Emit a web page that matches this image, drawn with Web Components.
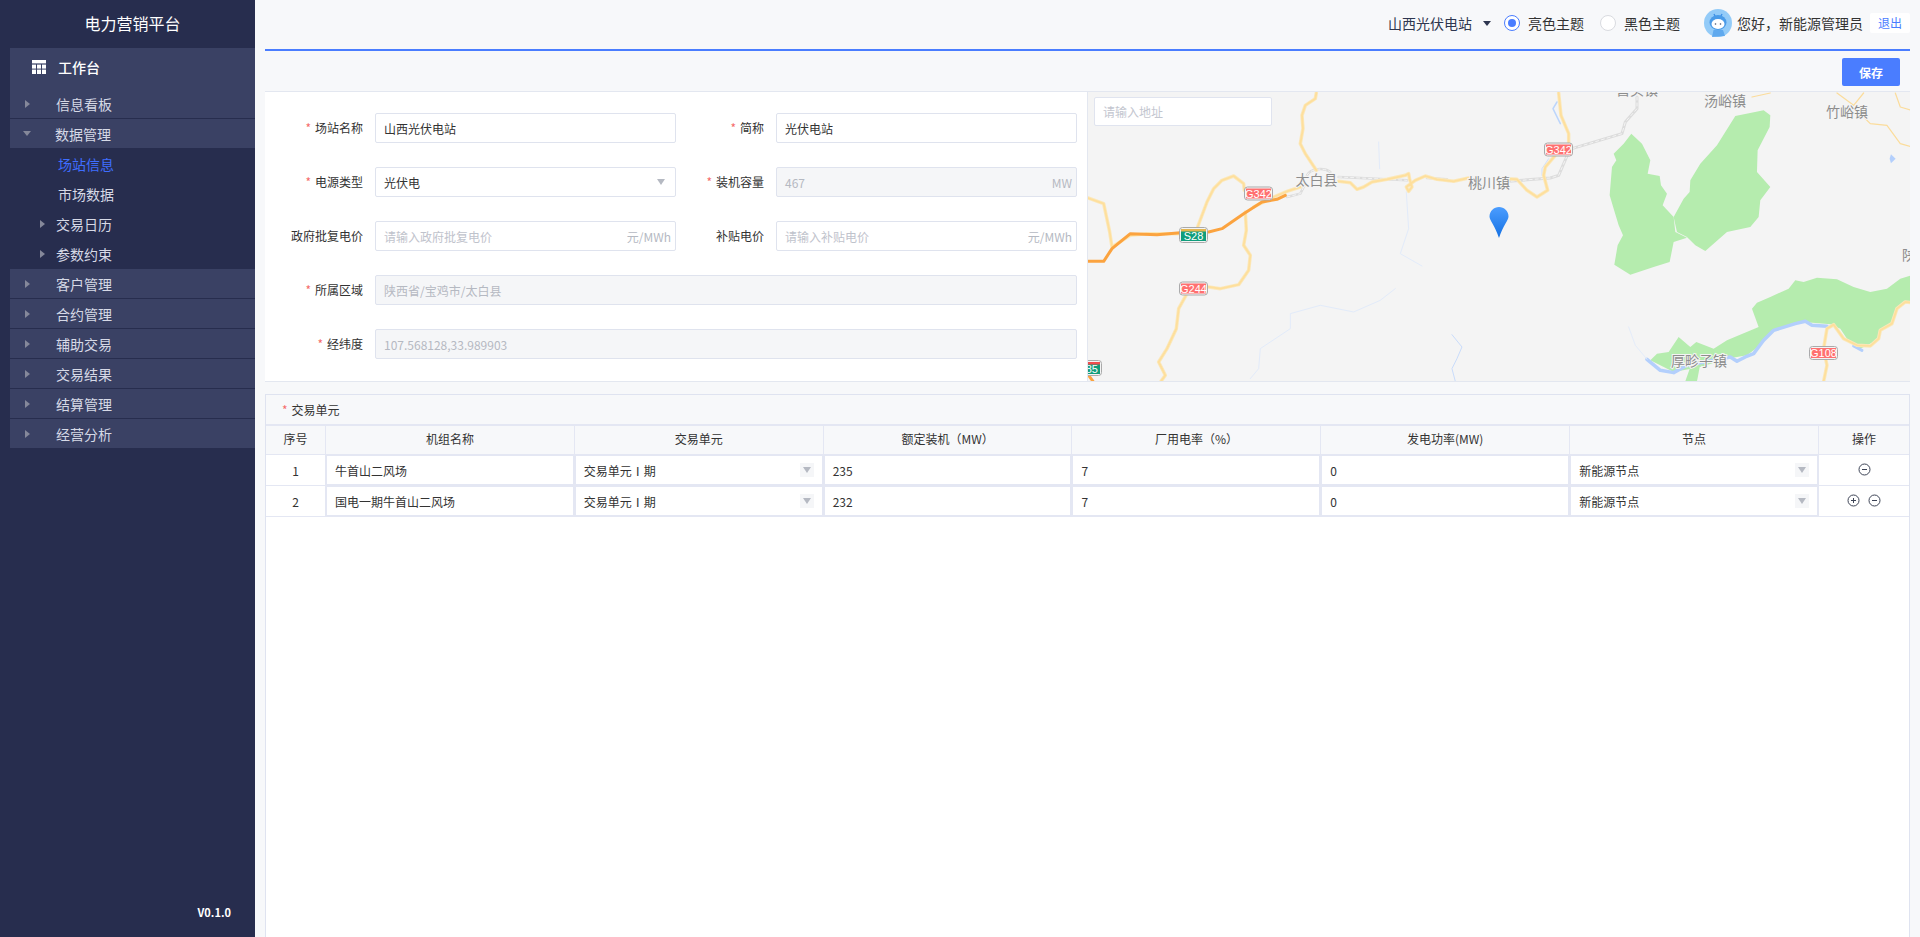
<!DOCTYPE html>
<html lang="zh">
<head>
<meta charset="utf-8">
<title>电力营销平台</title>
<style>
	html, body { margin: 0; height: 100%; overflow: hidden; }
	body {
		display: flex;
		background: #f7f8fa;
		color: #333;
		font-family: "Noto Sans CJK SC", "Noto Sans", sans-serif;
		font-size: 12px;
	}
	main { flex: 1; min-width: 0; display: flex; flex-direction: column; padding: 0 10px; }
	.editor { display: flex; background: #fff; border-top: 1px solid #e3e7f0; border-bottom: 1px solid #e3e7f0; height: 291px; box-sizing: border-box; }
</style>
</head>
<body>
<app-sidebar>
	<nav-item label="信息看板" arrow="right"></nav-item>
	<nav-item label="数据管理" arrow="down"></nav-item>
	<nav-item label="场站信息" sub active></nav-item>
	<nav-item label="市场数据" sub></nav-item>
	<nav-item label="交易日历" sub arrow="right"></nav-item>
	<nav-item label="参数约束" sub arrow="right"></nav-item>
	<nav-item label="客户管理" arrow="right"></nav-item>
	<nav-item label="合约管理" arrow="right"></nav-item>
	<nav-item label="辅助交易" arrow="right"></nav-item>
	<nav-item label="交易结果" arrow="right"></nav-item>
	<nav-item label="结算管理" arrow="right"></nav-item>
	<nav-item label="经营分析" arrow="right"></nav-item>
</app-sidebar>
<main>
	<top-bar></top-bar>
	<save-bar></save-bar>
	<div class="editor">
		<station-form></station-form>
		<map-view></map-view>
	</div>
	<unit-table></unit-table>
</main>

<script>
class AppSidebar extends HTMLElement {
	constructor() {
		super();
		this.shadowDOM = this.attachShadow({ mode: "open" });
	}

	connectedCallback() {
		this.shadowDOM.innerHTML = `
		<style>
		:host {
			display: flex;
			flex-direction: column;
			flex: none;
			width: 255px;
			height: 937px;
			box-sizing: border-box;
			padding-left: 10px;
			background: #272d4e;
			color: #fff;
		}
		.title {
			height: 48px;
			line-height: 47px;
			text-align: center;
			font-size: 16px;
		}
		.home {
			display: flex;
			align-items: center;
			gap: 12px;
			height: 41px;
			box-sizing: border-box;
			padding: 0 0 4px 22px;
			background: #3a4164;
			font-size: 14px;
			font-weight: 500;
		}
		.home svg { display: block; }
		.version {
			margin-top: auto;
			padding: 0 24px 16px 0;
			text-align: right;
			line-height: 18px;
			font-weight: 700;
			font-size: 11px;
		}
		</style>
		<div class="title">电力营销平台</div>
		<div class="home">
			<svg width="14" height="14" viewBox="0 0 14 14" fill="#fff">
				<rect width="14" height="3.4"/>
				<rect y="4.6" width="4" height="4"/><rect x="5" y="4.6" width="4" height="4"/><rect x="10" y="4.6" width="4" height="4"/>
				<rect y="9.6" width="4" height="4.4"/><rect x="5" y="9.6" width="4" height="4.4"/><rect x="10" y="9.6" width="4" height="4.4"/>
			</svg>
			<span>工作台</span>
		</div>
		<slot></slot>
		<div class="version">V0.1.0</div>
		`;
	}
}

class NavItem extends HTMLElement {
	constructor() {
		super();
		this.shadowDOM = this.attachShadow({ mode: "open" });
	}

	connectedCallback() {
		const arrow = this.getAttribute("arrow");
		const mark = arrow ? `<i class="${arrow}"></i>` : "";
		this.shadowDOM.innerHTML = `
		<style>
		:host {
			display: flex;
			align-items: center;
			height: 30px;
			box-sizing: border-box;
			padding-left: 15px;
			background: #3a4164;
			border-bottom: 1px solid #272d4e;
			color: #d6d9e6;
			font-size: 14px;
			line-height: 20px;
		}
		:host([sub]) {
			padding-left: 30px;
			background: #272d4e;
			border-bottom: 0;
		}
		i { display: block; flex: none; width: 0; height: 0; border-style: solid; border-color: transparent; }
		i.right { border-width: 4.5px 0 4.5px 5px; border-left-color: #85889a; margin-right: 26px; }
		i.down { border-width: 5px 4.5px 0 4.5px; border-top-color: #85889a; margin: 0 24px 0 -2px; }
		:host([sub]) i.right { margin-right: 11px; }
		:host([sub]:not([arrow])) { padding-left: 48px; }
		:host([active]) { color: #3f6eff; }
		</style>
		${mark}<span>${this.getAttribute("label")}</span>
		`;
	}
}

class ThemeRadio extends HTMLElement {
	constructor() {
		super();
		this.shadowDOM = this.attachShadow({ mode: "open" });
	}

	connectedCallback() {
		this.shadowDOM.innerHTML = `
		<style>
		:host { display: flex; align-items: center; gap: 8px; font-size: 14px; line-height: 20px; color: #333; }
		i { display: block; width: 16px; height: 16px; box-sizing: border-box; border: 1px solid #d9dbe0; border-radius: 50%; background: #fff; position: relative; }
		:host([checked]) i { border-color: #4a7dff; }
		:host([checked]) i::after { content: ""; position: absolute; left: 3px; top: 3px; width: 8px; height: 8px; border-radius: 50%; background: #4a7dff; }
		</style>
		<i></i><span><slot></slot></span>
		`;
	}
}

class TopBar extends HTMLElement {
	constructor() {
		super();
		this.shadowDOM = this.attachShadow({ mode: "open" });
	}

	connectedCallback() {
		this.shadowDOM.innerHTML = `
		<style>
		:host {
			display: flex;
			align-items: center;
			justify-content: flex-end;
			flex: none;
			height: 51px;
			box-sizing: border-box;
			padding-bottom: 3px;
			border-bottom: 2px solid #4a7dff;
			font-size: 14px;
			line-height: 20px;
			color: #333;
		}
		.station { color: #2e3650; }
		.caret { width: 0; height: 0; margin: 0 13px 0 11px; border-style: solid; border-width: 5px 4px 0; border-color: #2e3650 transparent transparent; }
		.dark { margin-left: 16px; }
		.avatar { display: block; margin-left: 24px; }
		.hello { margin-left: 5px; }
		.logout { margin-left: 7px; width: 40px; height: 20px; line-height: 20px; background: #fff; text-align: center; font-size: 12px; color: #4a7dff; border-radius: 2px; }
		</style>
		<span class="station">山西光伏电站</span>
		<span class="caret"></span>
		<theme-radio checked>亮色主题</theme-radio>
		<theme-radio class="dark">黑色主题</theme-radio>
		<svg class="avatar" width="28" height="28" viewBox="0 0 28 28">
			<circle cx="14" cy="14" r="14" fill="#93cbf8"/>
			<path d="M10 5 L11.5 8 M18 5 L16.5 8" stroke="#3d8fe6" stroke-width="1.4" fill="none"/>
			<path d="M8 28 L9.5 21 H19 L21 27 Z" fill="#5fa9ee"/>
			<ellipse cx="14" cy="13.5" rx="8.500" ry="7.500" fill="#4a9be8"/>
			<ellipse cx="14" cy="15" rx="6.500" ry="5" fill="#fff"/>
			<circle cx="11.5" cy="15" r=".8" fill="#44506a"/><circle cx="16.5" cy="15" r=".8" fill="#44506a"/>
		</svg>
		<span class="hello">您好，新能源管理员</span>
		<span class="logout">退出</span>
		`;
	}
}

class SaveBar extends HTMLElement {
	constructor() {
		super();
		this.shadowDOM = this.attachShadow({ mode: "open" });
	}

	connectedCallback() {
		this.shadowDOM.innerHTML = `
		<style>
		:host { display: flex; justify-content: flex-end; flex: none; height: 40px; box-sizing: border-box; padding: 7px 10px 0 0; }
		button {
			width: 58px;
			height: 28px;
			padding: 0;
			border: 0;
			border-radius: 2px;
			background: #4a7dff;
			color: #fff;
			font: 700 12px "Noto Sans CJK SC", sans-serif;
		}
		</style>
		<button type="button">保存</button>
		`;
	}
}

// label + box pair, the box text goes through the slot
class FormField extends HTMLElement {
	constructor() {
		super();
		this.shadowDOM = this.attachShadow({ mode: "open" });
	}

	connectedCallback() {
		const star = this.hasAttribute("required") ? "<em>*</em>" : "";
		const unit = this.getAttribute("unit");
		this.shadowDOM.innerHTML = `
		<style>
		:host { display: contents; color: #333; }
		label { align-self: center; justify-self: end; line-height: 30px; white-space: nowrap; }
		em { font-style: normal; color: #f56c6c; margin-right: 4px; }
		.box {
			display: flex;
			align-items: center;
			height: 30px;
			box-sizing: border-box;
			margin-left: 12px;
			padding: 0 8px;
			background: #fff;
			border: 1px solid #dfe3ee;
			border-radius: 2px;
			white-space: nowrap;
		}
		:host([wide]) .box { grid-column: 2 / -1; }
		:host([disabled]) .box { background: #f5f6f8; color: #b5b9c2; }
		:host([placeholder]) .value { color: #bfc3cc; }
		.unit { margin: 0 -4px 0 auto; color: #b5b9c2; }
		.drop { margin-left: auto; margin-right: 2px; width: 0; height: 0; border-style: solid; border-width: 6px 4.5px 0; border-color: #b5b9c2 transparent transparent; }
		</style>
		<label>${star}${this.getAttribute("label")}</label>
		<div class="box">
			<span class="value"><slot></slot></span>
			${unit ? `<span class="unit">${unit}</span>` : ""}
			${this.hasAttribute("select") ? `<span class="drop"></span>` : ""}
		</div>
		`;
	}
}

class StationForm extends HTMLElement {
	constructor() {
		super();
		this.shadowDOM = this.attachShadow({ mode: "open" });
	}

	connectedCallback() {
		this.shadowDOM.innerHTML = `
		<style>
		:host { display: block; flex: none; width: 822px; box-sizing: border-box; padding-top: 21px; }
		.grid { display: grid; grid-template-columns: 98px 313px 88px 313px; row-gap: 24px; }
		</style>
		<div class="grid">
			<form-field label="场站名称" required>山西光伏电站</form-field>
			<form-field label="简称" required>光伏电站</form-field>
			<form-field label="电源类型" required select>光伏电</form-field>
			<form-field label="装机容量" required disabled unit="MW">467</form-field>
			<form-field label="政府批复电价" placeholder unit="元/MWh">请输入政府批复电价</form-field>
			<form-field label="补贴电价" placeholder unit="元/MWh">请输入补贴电价</form-field>
			<form-field label="所属区域" required disabled wide>陕西省/宝鸡市/太白县</form-field>
			<form-field label="经纬度" required disabled wide>107.568128,33.989903</form-field>
		</div>
		`;
	}
}

class MapView extends HTMLElement {
	constructor() {
		super();
		this.shadowDOM = this.attachShadow({ mode: "open" });
	}

	shield(x, y, w, h, code, color, bar) {
		const top = bar ? `<rect x="${x + 2}" y="${y + 2}" width="${w - 3}" height="2.5" fill="${bar}"/>` : "";
		return `
			<rect x="${x + .5}" y="${y + .5}" width="${w}" height="${h}" rx="3" fill="#f4f4f4" stroke="#aaa"/>
			<rect x="${x + 2}" y="${y + 2}" width="${w - 3}" height="${h - 3}" fill="${color}"/>
			${top}
			<text class="code" x="${x + w / 2 + .5}" y="${y + h - 2}">${code}</text>`;
	}

	connectedCallback() {
		this.shadowDOM.innerHTML = `
		<style>
		:host { display: block; position: relative; flex: 1; min-width: 0; overflow: hidden; background: #f4f4f4; border-left: 1px solid #e3e7f0; }
		svg { display: block; position: absolute; left: -1px; top: 0; }
		path, polygon { vector-effect: non-scaling-stroke; stroke-linejoin: round; stroke-linecap: round; }
		.place { font: 14px "Noto Sans CJK SC", sans-serif; fill: #8d8d8d; stroke: #f4f4f4; stroke-width: 2px; paint-order: stroke; text-anchor: middle; }
		.code { font: 11px "Liberation Sans", sans-serif; fill: #fff; text-anchor: middle; }
		.search {
			position: absolute;
			left: 6px;
			top: 5px;
			width: 178px;
			height: 29px;
			box-sizing: border-box;
			padding-left: 8px;
			background: #fff;
			border: 1px solid #e0e4ef;
			border-radius: 2px;
			line-height: 27px;
			color: #c3c6cf;
			font-size: 12px;
		}
		</style>
		<svg width="825" height="290" viewBox="0 0 825 290">
			<defs>
				<linearGradient id="pin" x1="0" y1="0" x2="0" y2="1">
					<stop offset="0" stop-color="#4b9dff"/><stop offset="1" stop-color="#1470e2"/>
				</linearGradient>
				<g id="yellow-left" fill="none">
					<path d="M688,3 L685,20 L655,40 L645,70 L648,110 L640,155 L655,185 L688,235"/>
					<path d="M500,345 L560,315 L600,298 L640,285"/>
					<path d="M755,268 L790,272 L810,292 L830,285 L855,270 L900,262 L955,250 L965,245 L968,262 L975,285 L965,298 L958,285 L985,265 L1015,252 L1050,262 L1100,268 L1145,258"/>
					<path d="M332,405 L360,330 L380,290 L405,265 L440,252 L470,275 L472,295"/>
					<path d="M475,360 L478,415 L470,460 L490,490 L485,535 L455,578 L400,590 L365,585"/>
					<path d="M297,610 L275,650 L268,710 L240,770 L215,810 L235,850 L222,868"/>
					<path d="M3,318 L50,335 L68,420 L75,465 L130,430 L180,425 L280,425"/>
				</g>
				<g id="yellow-right" fill="none">
					<path d="M215,3 L222,70 L245,125 L245,152"/>
					<path d="M205,190 L175,225 L170,250 L182,295 L150,315 L120,295 L90,262 L60,260"/>
					<path d="M1010,868 L1020,820 L1010,770 L1020,710 L1040,698 L1070,740 L1110,760 L1150,762 L1175,740 L1180,715 L1215,695 L1230,650 L1255,630 L1275,632"/>
				</g>
				<g id="gray-left" fill="none">
					<path d="M600,315 L640,305 L655,275"/>
					<path d="M660,250 C670,230 710,225 730,240"/>
					<path d="M755,255 L820,258 L960,265"/>
					<path d="M1020,258 L1080,262"/>
				</g>
				<g id="gray-right" fill="none">
					<path d="M450,15 L450,50 L415,90 L405,125 L255,170"/>
					<path d="M240,192 L215,250 L190,258 L65,268"/>
				</g>
			</defs>

			<g transform="scale(.3333)">
				<g fill="none" stroke="#e2ebfa" stroke-width="1">
					<path d="M875,150 L878,230"/>
					<path d="M958,300 L965,410 L940,485 L1005,522"/>
					<path d="M925,590 L880,625 L800,660 L700,640 L610,665 L610,710 L520,770 L515,830 L490,860"/>
					<path d="M1095,728 L1125,765 L1110,800 L1095,830 L1105,868" stroke="#c9dcfb"/>
				</g>
				<use href="#gray-left" stroke="#dcdcdc" stroke-width="2.5"/>
				<use href="#gray-left" stroke="#f4f4f4" stroke-width="1" stroke-dasharray="3 3"/>
				<use href="#yellow-left" stroke="#fbe8bb" stroke-width="3.5"/>
				<use href="#yellow-left" stroke="#fedf9c" stroke-width="1.8"/>
				<g fill="none" stroke="#fba33f" stroke-width="3">
					<path d="M3,508 L50,508 L75,470 L130,425 L210,428 L280,422"/>
					<path d="M365,420 L405,410 L470,365 L525,330 L570,322 L595,310"/>
				</g>
				<path d="M5,850 L18,868" stroke="#fba33f" stroke-width="3" fill="none"/>
			</g>

			<g transform="translate(400,0) scale(.3333)">
				<polygon fill="#b5ecae" points="433,125 465,155 490,205 482,245 518,252 522,280 540,305 527,340 560,375 565,420 600,437 560,450 548,510 500,525 430,548 382,518 392,460 408,430 395,400 380,350 368,310 375,225 388,205 380,185 410,155"/>
				<polygon fill="#b5ecae" points="745,72 830,55 850,70 848,105 812,175 810,240 850,285 820,325 815,375 790,405 720,420 655,477 625,460 600,435 570,420 560,375 590,320 608,300 610,265 640,215 690,160"/>
				<polygon fill="#b5ecae" points="925,565 950,570 990,557 1050,562 1100,585 1150,600 1200,590 1240,560 1275,550 1275,630 1255,630 1230,650 1215,690 1180,715 1170,745 1120,770 1080,740 1060,710 1030,697 950,690 860,715 820,760 780,790 720,800 640,825 560,840 490,805 510,785 545,780 575,735 610,765 628,750 680,770 720,745 815,705 795,650 810,632 850,615 905,590"/>
				<polygon fill="#b5ecae" points="610,825 640,815 630,868 595,868"/>
				<path d="M480,802 L520,835 L560,842 L600,820 L680,805 L730,795 L750,808 L775,795 L800,785 L830,745 L860,715 L925,695 L955,688 L975,700 L1020,703" fill="none" stroke="#b3cffc" stroke-width="3.5"/>
				<path d="M1100,762 L1125,775" fill="none" stroke="#b3cffc" stroke-width="3"/>
				<path d="M425,705 L445,760 L480,802" fill="none" stroke="#e4ecfa" stroke-width="1"/>
				<path d="M210,30 L198,50 L220,95" fill="none" stroke="#bcd5fb" stroke-width="1.5"/>
				<path d="M185,200 L165,230 L165,250" fill="none" stroke="#cfdffb" stroke-width="1"/>
				<polygon fill="#b3cffc" points="1212,187 1226,200 1212,214 1208,200"/>
				<use href="#gray-right" stroke="#dcdcdc" stroke-width="3"/>
				<use href="#gray-right" stroke="#f4f4f4" stroke-width="1" stroke-dasharray="3 3"/>
				<g fill="none" stroke="#fbdc9b" stroke-width="1.2">
					<path d="M795,15 L850,3"/>
					<path d="M1050,3 L1100,40 L1130,3"/>
					<path d="M1130,75 L1150,95 L1200,100 L1240,155 L1275,165"/>
					<path d="M1225,3 L1240,45 L1275,55"/>
				</g>
				<use href="#yellow-right" stroke="#fbe8bb" stroke-width="3.5"/>
				<use href="#yellow-right" stroke="#fedf9c" stroke-width="1.8"/>
			</g>

			${this.shield(157, 94.5, 28, 13, "G342", "#ff7070")}
			${this.shield(92, 135, 28, 15, "S28", "#0f9d7c", "#e3b650")}
			${this.shield(92, 189.5, 28, 13, "G244", "#ff7070")}
			${this.shield(457, 50.5, 28, 13, "G342", "#ff7070")}
			${this.shield(722, 254, 28, 13, "G108", "#ff7070")}
			${this.shield(-14, 268, 28, 15, "G85", "#0f9d7c", "#ef4d4d")}

			<text class="place" x="229.5" y="93">太白县</text>
			<text class="place" x="402" y="96">桃川镇</text>
			<text class="place" x="550" y="3">营头镇</text>
			<text class="place" x="638" y="14">汤峪镇</text>
			<text class="place" x="760" y="25">竹峪镇</text>
			<text class="place" x="612" y="274">厚畛子镇</text>
			<text class="place" x="822" y="168">陕</text>

			<path d="M412,146 C408,134 402.500,128 402.500,124.500 C402.500,119 407,115 412,115 C417,115 421.500,119 421.500,124.500 C421.500,128 416,134 412,146 Z" fill="url(#pin)"/>
		</svg>
		<div class="search">请输入地址</div>
		`;
	}
}

class UnitTable extends HTMLElement {
	constructor() {
		super();
		this.shadowDOM = this.attachShadow({ mode: "open" });
	}

	opIcon(kind) {
		const plus = kind === "plus" ? `<path d="M6.500 4 V9"/>` : "";
		return `<svg width="13" height="13" viewBox="0 0 13 13" fill="none" stroke="#3d4456"><circle cx="6.500" cy="6.500" r="5.500"/><path d="M4 6.500 H9"/>${plus}</svg>`;
	}

	row(data, ops) {
		return `
		<div class="cell num">${data.no}</div>
		<div class="cell box">${data.name}</div>
		<div class="cell box">交易单元Ⅰ期<i></i></div>
		<div class="cell box">${data.power}</div>
		<div class="cell box">7</div>
		<div class="cell box">0</div>
		<div class="cell box">新能源节点<i></i></div>
		<div class="cell ops">${ops.map((k) => this.opIcon(k)).join("")}</div>
		`;
	}

	connectedCallback() {
		this.shadowDOM.innerHTML = `
		<style>
		:host {
			display: flex;
			flex-direction: column;
			flex: 1;
			margin-top: 12px;
			background: #fff;
			border: 1px solid #dfe3f0;
			border-bottom: 0;
			color: #333;
			font-size: 12px;
		}
		.title { height: 29px; line-height: 29px; padding-left: 16px; background: #f7f8fa; }
		em { font-style: normal; color: #f56c6c; margin-right: 4px; }
		.grid { display: grid; grid-template-columns: 60px repeat(6, 1fr) 90px; grid-auto-rows: 31px; }
		.head { height: 31px; box-sizing: border-box; line-height: 25px; text-align: center; background: #f7f8fa; border-top: 2px solid #e4e7f3; border-bottom: 1px solid #e4e7f3; border-right: 1px solid #e4e7f3; }
		.grid > .head:nth-child(8) { border-right: 0; }
		.cell { box-sizing: border-box; display: flex; align-items: center; border-bottom: 1px solid #e4e7f3; border-right: 1px solid #e4e7f3; }
		.num { justify-content: center; }
		.box { position: relative; padding-left: 8px; border: 2px solid #e4e7f3; border-top-width: 1px; border-left-width: 1px; white-space: nowrap; }
		.box i { position: absolute; right: 8px; top: 7px; width: 14px; height: 14px; background: #f5f6f8; }
		.box i::after { content: ""; position: absolute; left: 3px; top: 4px; border-style: solid; border-width: 6px 4px 0; border-color: #b5b9c2 transparent transparent; }
		.ops { justify-content: center; gap: 8px; border-right: 0; padding-left: 1px; }
		.ops svg { display: block; margin-top: -2px; }
		</style>
		<div class="title"><em>*</em>交易单元</div>
		<div class="grid">
			<div class="head">序号</div>
			<div class="head">机组名称</div>
			<div class="head">交易单元</div>
			<div class="head">额定装机（MW）</div>
			<div class="head">厂用电率（%）</div>
			<div class="head">发电功率(MW)</div>
			<div class="head">节点</div>
			<div class="head">操作</div>
			${this.row({ no: 1, name: "牛首山二风场", power: 235 }, ["minus"])}
			${this.row({ no: 2, name: "国电一期牛首山二风场", power: 232 }, ["plus", "minus"])}
		</div>
		`;
	}
}

customElements.define("app-sidebar", AppSidebar);
customElements.define("nav-item", NavItem);
customElements.define("theme-radio", ThemeRadio);
customElements.define("top-bar", TopBar);
customElements.define("save-bar", SaveBar);
customElements.define("form-field", FormField);
customElements.define("station-form", StationForm);
customElements.define("map-view", MapView);
customElements.define("unit-table", UnitTable);
</script>
</body>
</html>
